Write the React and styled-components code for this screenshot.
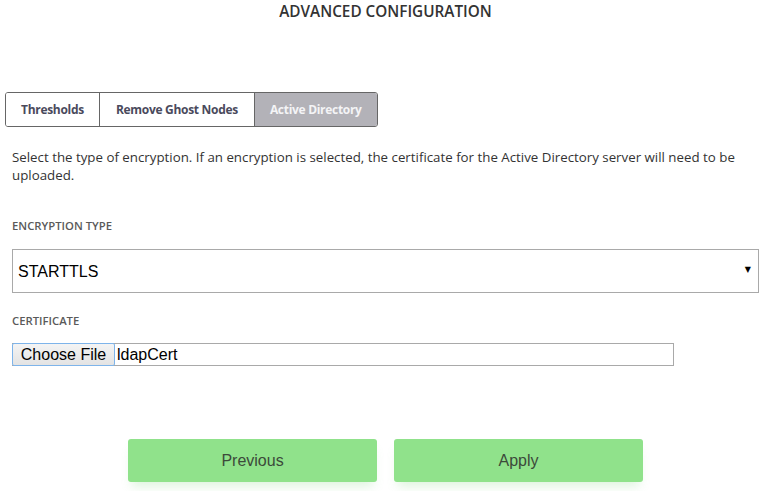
import React from 'react'
import styled, { createGlobalStyle } from 'styled-components'

const GlobalStyle = createGlobalStyle`
  body {
    margin: 0;
    background: #fff;
    font-family: "Open Sans", "Liberation Sans", sans-serif;
  }
`

const Page = styled.div`
  width: 771px;
  height: 491px;
  display: flex;
  flex-direction: column;
  overflow: hidden;
`

const Title = styled.h1`
  margin: 0;
  padding-top: 1px;
  height: 92px;
  box-sizing: border-box;
  text-align: center;
  font-size: 15.3px;
  font-weight: 600;
  line-height: 20px;
  color: #333;
`

const Tabs = styled.div`
  display: flex;
  margin-left: 5px;
  align-self: flex-start;
  border: 1px solid #666;
  border-radius: 3px;
  overflow: hidden;
  height: 35px;
  box-sizing: border-box;
`

const Tab = styled.div`
  display: flex;
  align-items: center;
  padding: 0 ${({ $pad }) => $pad}px;
  font-size: 12px;
  font-weight: 700;
  letter-spacing: -0.3px;
  color: ${({ $active }) => ($active ? '#f4f4f6' : '#4a4a5c')};
  background: ${({ $active }) => ($active ? '#b3b2b8' : '#fff')};
  border-left: ${({ $first }) => ($first ? 'none' : '1px solid #666')};
`

const Body = styled.div`
  padding: 0 12px;
  display: flex;
  flex-direction: column;
`

const Intro = styled.p`
  margin: 21px 0 0;
  font-size: 13.3px;
  line-height: 18px;
  color: #333;
`

const Label = styled.div`
  margin-top: ${({ $top }) => $top}px;
  font-size: 11.3px;
  font-weight: 600;
  color: #5a5a5a;
  line-height: 14px;
`

const SelectWrap = styled.div`
  position: relative;
  margin-top: 16px;
`

const Select = styled.select`
  width: 100%;
  height: 44px;
  appearance: none;
  border: 1px solid #a9a9a9;
  background: #fff;
  padding: 0 5px;
  font-family: "Liberation Sans", Arial, sans-serif;
  font-size: 16px;
  color: #000;
  border-radius: 0;
  outline: none;
`

const Arrow = styled.span`
  position: absolute;
  right: 8px;
  top: 16px;
  font-size: 8px;
  color: #000;
  pointer-events: none;
  font-family: "DejaVu Sans", sans-serif;
`

const FileRow = styled.div`
  display: flex;
  align-items: stretch;
  width: 662px;
  height: 23px;
  margin-top: 15px;
  border: 1px solid #a9a9a9;
  border-left: none;
  box-sizing: border-box;
`

const ChooseButton = styled.button`
  margin: -1px 0;
  width: 103px;
  border: 1px solid #7eb4ea;
  border-radius: 2px;
  background: linear-gradient(#f4f4f4, #e3e3e3);
  font-family: "Liberation Sans", Arial, sans-serif;
  font-size: 16px;
  color: #000;
  padding: 0;
`

const FileName = styled.span`
  display: flex;
  align-items: center;
  padding-left: 2px;
  font-family: "Liberation Sans", Arial, sans-serif;
  font-size: 16px;
  color: #000;
`

const Actions = styled.div`
  display: flex;
  justify-content: center;
  gap: 17px;
  margin-top: 73px;
`

const ActionButton = styled.button`
  width: 249px;
  height: 43px;
  border: none;
  border-radius: 3px;
  background: #90e28b;
  color: #3c4a3a;
  font-family: "Liberation Sans", Arial, sans-serif;
  font-size: 16px;
  box-shadow: 0 8px 10px -4px rgba(120, 210, 120, 0.25);
  cursor: pointer;
`

export default function App() {
  return (
    <>
      <GlobalStyle />
      <Page>
        <Title>ADVANCED CONFIGURATION</Title>
        <Tabs>
          <Tab $first $pad={15}>Thresholds</Tab>
          <Tab $pad={16}>Remove Ghost Nodes</Tab>
          <Tab $active $pad={15}>Active Directory</Tab>
        </Tabs>
        <Body>
          <Intro>
            Select the type of encryption. If an encryption is selected, the certificate for the Active Directory server will need to be uploaded.
          </Intro>
          <Label $top={35}>ENCRYPTION TYPE</Label>
          <SelectWrap>
            <Select defaultValue="STARTTLS">
              <option>NONE</option>
              <option>STARTTLS</option>
              <option>SSL</option>
            </Select>
            <Arrow>▼</Arrow>
          </SelectWrap>
          <Label $top={21}>CERTIFICATE</Label>
          <FileRow>
            <ChooseButton>Choose File</ChooseButton>
            <FileName>ldapCert</FileName>
          </FileRow>
        </Body>
        <Actions>
          <ActionButton>Previous</ActionButton>
          <ActionButton>Apply</ActionButton>
        </Actions>
      </Page>
    </>
  )
}
